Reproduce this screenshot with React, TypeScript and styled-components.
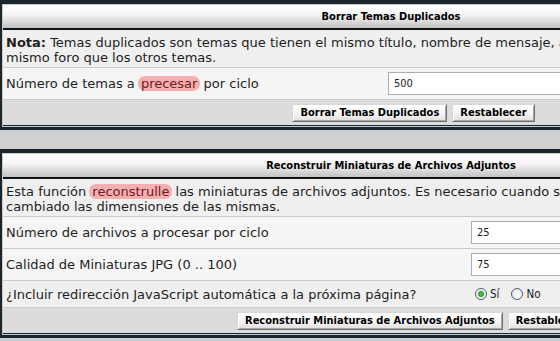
import styled, { createGlobalStyle } from "styled-components";

const GlobalStyle = createGlobalStyle`
  body {
    margin: 0;
    background: #d0d0d0;
    font-family: "DejaVu Sans", Verdana, sans-serif;
    color: #1e1e1e;
  }
`;

const Page = styled.div`
  width: 560px;
  height: 341px;
  overflow: hidden;
  display: flex;
  flex-direction: column;
  gap: 19px;
`;

const Forumline = styled.div`
  flex: none;
  width: 776px;
  border: 2px solid #1a252c;
  border-top-width: 4px;
  border-bottom-width: 3px;
  background: #c7cbce;
  padding: 1px;
  display: flex;
  flex-direction: column;
  gap: 1px;
`;

const Header = styled.div`
  height: 23px;
  display: flex;
  align-items: center;
  justify-content: center;
  background: linear-gradient(#ffffff, #f6f6f6 40%, #c2c2c2);
  border-bottom: 2px solid #0e1215;
  margin-bottom: -1px;
  font: bold 11px "DejaVu Sans Condensed", "DejaVu Sans", sans-serif;
  color: #000;
`;

const TextRow = styled.div`
  background: #efefef;
  padding: 5px 4px 2px 3px;
  font-size: 13px;
  line-height: 15px;
  white-space: nowrap;

  b {
    font-weight: bold;
  }
`;

const FormRow = styled.div<{ $labelWidth: number; $height: number; $alt?: boolean }>`
  display: grid;
  grid-template-columns: ${({ $labelWidth }) => $labelWidth}px 1fr;
  align-items: center;
  height: ${({ $height }) => $height}px;
  background: ${({ $alt }) => ($alt ? "#efefef" : "#f5f5f5")};
`;

const Label = styled.div`
  padding: 0 4px 0 3px;
  font-size: 13px;
  line-height: 15px;
  white-space: nowrap;
`;

const Field = styled.div`
  padding: 0 4px;
  display: flex;
  align-items: center;
`;

const Input = styled.input`
  box-sizing: border-box;
  width: 200px;
  height: 23px;
  border: 1px solid #a7aeb4;
  background: #fff;
  padding: 0 5px;
  font: 11px "DejaVu Sans Condensed", "DejaVu Sans", sans-serif;
  color: #222;
  outline: none;
`;

const ButtonRow = styled.div`
  height: 25px;
  display: flex;
  align-items: center;
  justify-content: center;
  gap: 5px;
  padding-left: 45px;
  background: #dcdcdc;
  border-bottom: 1px solid #1a252c;
`;

const Button = styled.button`
  height: 18px;
  padding: 0 7px;
  border: 1px solid #6f6f6f;
  border-top-color: #d8d8d8;
  border-left-color: #d8d8d8;
  box-shadow: inset 1px 1px 0 #ffffff, inset -1px -1px 0 #a8a8a8;
  background: linear-gradient(#ffffff, #f2f2f2 60%, #dedede);
  font: bold 11px "DejaVu Sans Condensed", "DejaVu Sans", sans-serif;
  color: #000;
  white-space: nowrap;
`;

const Highlight = styled.span`
  background: #f4b0b0;
  color: #6e1b1b;
  border-radius: 7px;
  padding: 0 3px;
  margin: 0 -1px;
`;

const Radios = styled.div`
  display: flex;
  align-items: center;
  padding-left: 8px;
  font: 11.5px "DejaVu Sans Condensed", "DejaVu Sans", sans-serif;
`;

const RadioOption = styled.label`
  display: flex;
  align-items: center;
  gap: 3px;
  margin-right: 12px;
`;

const RadioDot = styled.span<{ $checked?: boolean }>`
  box-sizing: border-box;
  width: 12px;
  height: 12px;
  border-radius: 50%;
  border: 1px solid #4a6079;
  background: ${({ $checked }) =>
    $checked
      ? "radial-gradient(circle, #5fd35f 0, #24a324 2.5px, #e9ece6 3.5px, #ffffff 6px)"
      : "radial-gradient(circle at 60% 60%, #ffffff 0, #e4e6e0 6px)"};
`;

export default function App() {
  return (
    <>
      <GlobalStyle />
      <Page>
        <Forumline>
          <Header>Borrar Temas Duplicados</Header>
          <TextRow>
            <b>Nota:</b> Temas duplicados son temas que tienen el mismo título,
            nombre de mensaje, autor y tiempo de envío,
            <br />
            mismo foro que los otros temas.
          </TextRow>
          <FormRow $labelWidth={381} $height={31}>
            <Label>
              Número de temas a <Highlight>precesar</Highlight> por ciclo
            </Label>
            <Field>
              <Input defaultValue="500" />
            </Field>
          </FormRow>
          <ButtonRow>
            <Button>Borrar Temas Duplicados</Button>
            <Button>Restablecer</Button>
          </ButtonRow>
        </Forumline>

        <Forumline>
          <Header>Reconstruir Miniaturas de Archivos Adjuntos</Header>
          <TextRow>
            Esta función <Highlight>reconstrulle</Highlight> las miniaturas de
            archivos adjuntos. Es necesario cuando se han
            <br />
            cambiado las dimensiones de las mismas.
          </TextRow>
          <FormRow $labelWidth={464} $height={31}>
            <Label>Número de archivos a procesar por ciclo</Label>
            <Field>
              <Input defaultValue="25" />
            </Field>
          </FormRow>
          <FormRow $labelWidth={464} $height={31}>
            <Label>Calidad de Miniaturas JPG (0 .. 100)</Label>
            <Field>
              <Input defaultValue="75" />
            </Field>
          </FormRow>
          <FormRow $labelWidth={464} $height={26} $alt>
            <Label>¿Incluir redirección JavaScript automática a la próxima página?</Label>
            <Radios>
              <RadioOption>
                <RadioDot $checked />
                Sí
              </RadioOption>
              <RadioOption>
                <RadioDot />
                No
              </RadioOption>
            </Radios>
          </FormRow>
          <ButtonRow>
            <Button>Reconstruir Miniaturas de Archivos Adjuntos</Button>
            <Button>Restablecer</Button>
          </ButtonRow>
        </Forumline>
      </Page>
    </>
  );
}
